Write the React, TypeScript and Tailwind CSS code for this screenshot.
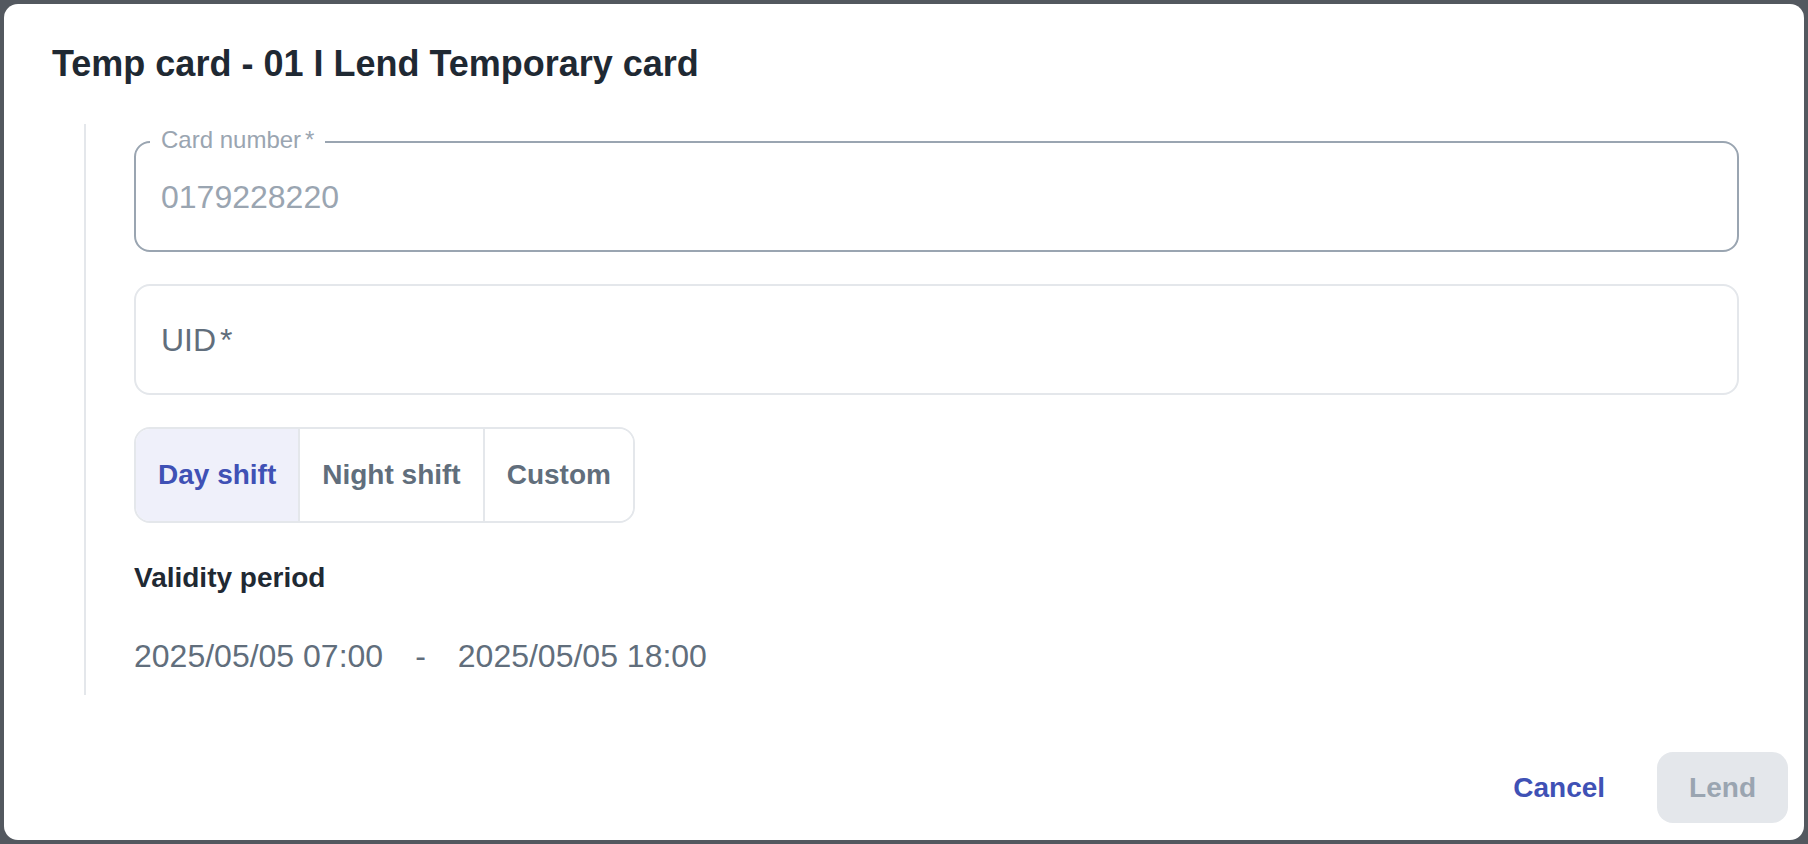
import React, { useState } from 'react';

const shifts = ['Day shift', 'Night shift', 'Custom'];

const App: React.FC = () => {
  const [shift, setShift] = useState('Day shift');

  return (
    <div className="w-screen h-screen bg-[#53585f] p-1 font-['Liberation_Sans',Arial,sans-serif]">
      <div className="flex flex-col h-full bg-white rounded-[14px] overflow-hidden">
        {/* Header */}
        <h1 className="pl-12 pt-10 text-[36px] leading-[40px] font-bold text-[#1f2933]">
          Temp card - 01 I Lend Temporary card
        </h1>

        {/* Body */}
        <div className="pl-[80px] pr-[65px] mt-10">
          <div className="border-l-2 border-[#e4e7eb] pl-12 pt-[17px] pb-[19px]">
            {/* Card number (filled) */}
            <div className="relative h-[111px] flex items-center border-2 border-[#9aa5b1] rounded-2xl pl-[25px]">
              <span className="absolute -top-[15px] left-[14px] bg-white px-[11px] text-[24px] leading-[24px] text-[#9aa5b1]">
                Card number<span className="ml-[4px]">*</span>
              </span>
              <span className="text-[32px] leading-[40px] text-[#9aa5b1]">0179228220</span>
            </div>

            {/* UID (empty) */}
            <div className="mt-8 h-[111px] flex items-center border-2 border-[#e4e7eb] rounded-2xl pl-[25px]">
              <span className="text-[32px] leading-[40px] text-[#616e7c]">
                UID<span className="ml-[4px]">*</span>
              </span>
            </div>

            {/* Shift selector */}
            <div className="mt-8 inline-flex h-[96px] border-2 border-[#e4e7eb] rounded-2xl overflow-hidden">
              {shifts.map((s, i) => (
                <button
                  key={s}
                  onClick={() => setShift(s)}
                  className={
                    'px-[22px] text-[28px] font-bold ' +
                    (i < shifts.length - 1 ? 'border-r-2 border-[#e4e7eb] ' : '') +
                    (shift === s ? 'bg-[#eff0fa] text-[#3f51b5]' : 'bg-white text-[#616e7c]')
                  }
                >
                  {s}
                </button>
              ))}
            </div>

            <div className="mt-[39px] text-[28px] leading-[32px] font-bold text-[#1f2933]">Validity period</div>

            <div className="mt-[42px] flex text-[32px] leading-[40px] text-[#616e7c]">
              <span>2025/05/05 07:00</span>
              <span className="mx-8">-</span>
              <span>2025/05/05 18:00</span>
            </div>
          </div>
        </div>

        {/* Footer */}
        <div className="mt-auto flex justify-end items-center gap-5 pr-4 pb-[17px]">
          <button className="h-[71px] px-8 text-[28px] font-bold text-[#3f51b5]">Cancel</button>
          <button disabled className="h-[71px] px-8 rounded-2xl bg-[#e4e7eb] text-[28px] font-bold text-[#9aa5b1]">
            Lend
          </button>
        </div>
      </div>
    </div>
  );
};

export default App;
